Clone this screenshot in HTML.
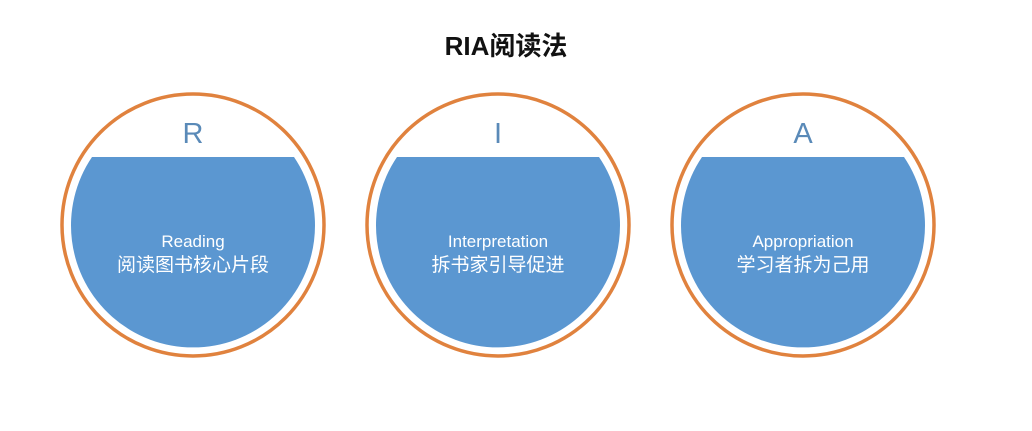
<!DOCTYPE html>
<html><head><meta charset="utf-8"><style>
html,body{margin:0;padding:0;background:#fff;}
body{width:1032px;height:426px;overflow:hidden;}
</style></head><body>
<svg width="1032" height="426" viewBox="0 0 1032 426" xmlns="http://www.w3.org/2000/svg">
<text x="506" y="55" text-anchor="middle" font-family="Liberation Sans, 'Noto Sans CJK SC', sans-serif" font-weight="bold" font-size="26" fill="#111">RIA阅读法</text>
<g font-family="Liberation Sans, 'Noto Sans CJK SC', sans-serif" text-anchor="middle">
<g transform="translate(193,225)">
<circle r="131" fill="#fff" stroke="#e0823e" stroke-width="3.5"/>
<path d="M-101,-68 L101,-68 A122,122 0 1 1 -101,-68 Z" fill="#5b97d1"/>
<text y="-82" font-size="29" fill="#5a8ab8">R</text>
<text y="22" font-size="17" fill="#fff">Reading</text>
<text y="46" font-size="19" fill="#fff">阅读图书核心片段</text>
</g>
<g transform="translate(498,225)">
<circle r="131" fill="#fff" stroke="#e0823e" stroke-width="3.5"/>
<path d="M-101,-68 L101,-68 A122,122 0 1 1 -101,-68 Z" fill="#5b97d1"/>
<text y="-82" font-size="29" fill="#5a8ab8">I</text>
<text y="22" font-size="17" fill="#fff">Interpretation</text>
<text y="46" font-size="19" fill="#fff">拆书家引导促进</text>
</g>
<g transform="translate(803,225)">
<circle r="131" fill="#fff" stroke="#e0823e" stroke-width="3.5"/>
<path d="M-101,-68 L101,-68 A122,122 0 1 1 -101,-68 Z" fill="#5b97d1"/>
<text y="-82" font-size="29" fill="#5a8ab8">A</text>
<text y="22" font-size="17" fill="#fff">Appropriation</text>
<text y="46" font-size="19" fill="#fff">学习者拆为己用</text>
</g>
</g>
</svg>
</body></html>
